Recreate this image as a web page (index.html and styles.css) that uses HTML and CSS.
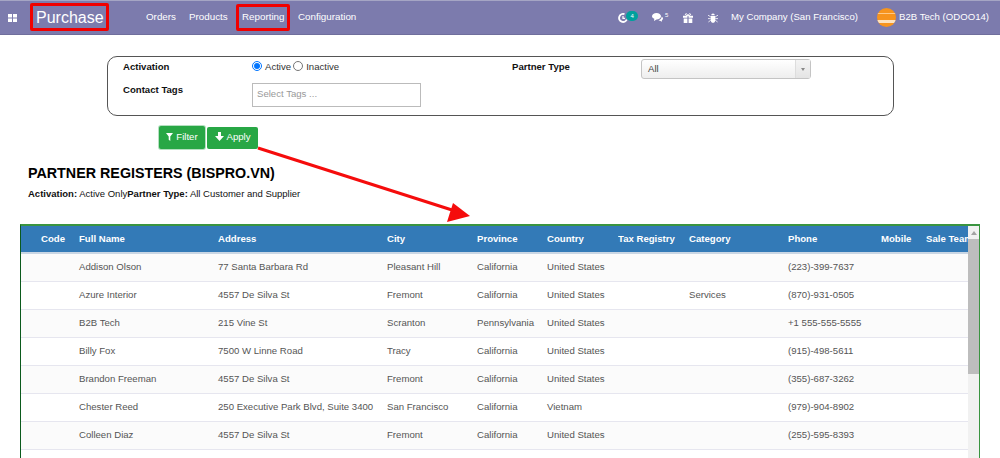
FILE: index.html
```html
<!DOCTYPE html>
<html lang="en">
<head>
    <meta charset="UTF-8">
    <meta name="viewport" content="width=device-width, initial-scale=1.0">
    <title>Partner Registers</title>
    <link rel="stylesheet" href="styles.css">
</head>
<body>

    <!-- Top bar -->
    <nav class="navbar">
        <svg class="apps-icon" width="9" height="8" viewBox="0 0 9 8"><path fill="#fff" d="M0 0h4v3.500H0zM5 0h4v3.500H5zM0 4.500h4V8H0zM5 4.500h4V8H5z"/></svg>
        <span class="brand">Purchase</span>
        <div class="menu">
            <a class="menu-item menu-orders">Orders</a>
            <a class="menu-item menu-products">Products</a>
            <a class="menu-item menu-reporting">Reporting</a>
            <a class="menu-item menu-config">Configuration</a>
        </div>
        <div class="systray">
            <span class="tray-item tray-clock">
                <svg width="10" height="10" viewBox="0 0 10 10"><path fill="none" stroke="#fff" stroke-width="1.900" d="M8.800 6.500A4 4 0 1 1 6.500 1.200"/><path fill="none" stroke="#fff" stroke-width="1.200" d="M5 3v2.400h2"/></svg>
                <span class="badge">4</span>
            </span>
            <span class="tray-item tray-chat">
                <svg width="11" height="9" viewBox="0 0 11 9"><path fill="#fff" d="M4.500 0C7 0 9 1.400 9 3.200S7 6.400 4.500 6.400L2 8l.3-2.200C.9 5.200 0 4.300 0 3.200 0 1.400 2 0 4.500 0z"/><path fill="#fff" d="M9.700 3.600c.8.500 1.300 1.200 1.300 2 0 .8-.5 1.400-1.200 1.800l.2 1.400-2-1.100-1.500-.2c1.700-.5 3.200-2 3.200-3.900z"/></svg>
                <sup class="chat-count">5</sup>
            </span>
            <span class="tray-item tray-gift">
                <svg width="10" height="10" viewBox="0 0 10 10"><path fill="#fff" d="M0 2.800h4.400v2H0zM5.600 2.800H10v2H5.600zM.7 5.400h3.700V10H.7zM5.600 5.400h3.700V10H5.600z"/><path fill="none" stroke="#fff" stroke-width="1" d="M5 2.700C3.600 2.700 2.400 2.300 2.400 1.300 2.400.4 4.200.3 5 2.700 5.800.3 7.600.4 7.600 1.300 7.600 2.300 6.400 2.700 5 2.700z"/></svg>
            </span>
            <span class="tray-item tray-bug">
                <svg width="10" height="10" viewBox="0 0 10 10"><path fill="#fff" d="M3.200 2.200a1.800 1.800 0 0 1 3.600 0zM2.700 3h4.600v4.200C7.300 8.800 6 9.800 5 9.800S2.700 8.800 2.700 7.200z"/><path fill="none" stroke="#fff" stroke-width=".8" d="M0 2.200l2.700 1.600M10 2.200L7.300 3.800M0 5.600h2.700M10 5.600H7.300M.4 9l2.400-1.800M9.600 9L7.200 7.200"/></svg>
            </span>
            <span class="company">My Company (San Francisco)</span>
            <span class="avatar">
                <span class="avatar-line"></span>
                <span class="avatar-stripe"></span>
            </span>
            <span class="user">B2B Tech (ODOO14)</span>
        </div>
    </nav>

    <!-- Filter box -->
    <div class="filter-box">
        <div class="filter-row">
            <label class="filter-label">Activation</label>
            <div class="filter-value radios">
                <input type="radio" name="activation" checked> <span>Active</span>
                <input type="radio" name="activation"> <span>Inactive</span>
            </div>
            <label class="filter-label">Partner Type</label>
            <div class="fake-select">
                <span class="select-text">All</span>
                <span class="select-btn"><span class="select-arrow"></span></span>
            </div>
        </div>
        <div class="filter-row tags-row">
            <label class="filter-label">Contact Tags</label>
            <div class="tags-input">Select Tags ...</div>
        </div>
    </div>

    <div class="buttons">
        <button class="btn btn-filter" type="button">
            <svg width="7" height="8" viewBox="0 0 7 8"><path fill="#fff" d="M0 0h7L4.300 3.400V8L2.700 6.800V3.400z"/></svg>
            Filter
        </button>
        <button class="btn btn-apply" type="button">
            <svg width="9" height="9" viewBox="0 0 9 9"><path fill="#fff" d="M3 0h3v4h3L4.500 9 0 4h3z"/></svg>
            Apply
        </button>
    </div>

    <h2 class="report-title">PARTNER REGISTERS (BISPRO.VN)</h2>
    <p class="report-sub"><b>Activation:</b> Active Only<b>Partner Type:</b> All Customer and Supplier</p>

    <!-- Report table -->
    <div class="table-wrap">
        <table class="report">
            <colgroup>
                <col class="c-code"><col class="c-name"><col class="c-address"><col class="c-city"><col class="c-province">
                <col class="c-country"><col class="c-tax"><col class="c-category"><col class="c-phone"><col class="c-mobile"><col class="c-team">
            </colgroup>
            <thead>
                <tr>
                    <th class="code">Code</th><th>Full Name</th><th>Address</th><th>City</th><th>Province</th>
                    <th>Country</th><th>Tax Registry</th><th>Category</th><th>Phone</th><th>Mobile</th><th>Sale Team</th>
                </tr>
            </thead>
            <tbody>
                <tr><td></td><td>Addison Olson</td><td>77 Santa Barbara Rd</td><td>Pleasant Hill</td><td>California</td><td>United States</td><td></td><td></td><td>(223)-399-7637</td><td></td><td></td></tr>
                <tr><td></td><td>Azure Interior</td><td>4557 De Silva St</td><td>Fremont</td><td>California</td><td>United States</td><td></td><td>Services</td><td>(870)-931-0505</td><td></td><td></td></tr>
                <tr><td></td><td>B2B Tech</td><td>215 Vine St</td><td>Scranton</td><td>Pennsylvania</td><td>United States</td><td></td><td></td><td>+1 555-555-5555</td><td></td><td></td></tr>
                <tr><td></td><td>Billy Fox</td><td>7500 W Linne Road</td><td>Tracy</td><td>California</td><td>United States</td><td></td><td></td><td>(915)-498-5611</td><td></td><td></td></tr>
                <tr><td></td><td>Brandon Freeman</td><td>4557 De Silva St</td><td>Fremont</td><td>California</td><td>United States</td><td></td><td></td><td>(355)-687-3262</td><td></td><td></td></tr>
                <tr><td></td><td>Chester Reed</td><td>250 Executive Park Blvd, Suite 3400</td><td>San Francisco</td><td>California</td><td>Vietnam</td><td></td><td></td><td>(979)-904-8902</td><td></td><td></td></tr>
                <tr><td></td><td>Colleen Diaz</td><td>4557 De Silva St</td><td>Fremont</td><td>California</td><td>United States</td><td></td><td></td><td>(255)-595-8393</td><td></td><td></td></tr>
                <tr><td></td><td></td><td></td><td></td><td></td><td></td><td></td><td></td><td></td><td></td><td></td></tr>
            </tbody>
        </table>
        <div class="scrollbar">
            <span class="scroll-up"></span>
            <span class="scroll-thumb"></span>
        </div>
    </div>

    <!-- Red annotations drawn over the screenshot -->
    <span class="mark mark-brand"></span>
    <span class="mark mark-reporting"></span>
    <svg class="arrow" width="1000" height="458" viewBox="0 0 1000 458">
        <path fill="none" stroke="#f50c0c" stroke-width="3" d="M258 148L452 210"/>
        <path fill="#f50c0c" d="M470 216L447 222L453 203z"/>
    </svg>

</body>
</html>
```

FILE: styles.css
```css
html, body {
    margin: 0;
    height: 458px;
    overflow: hidden;
}

body {
    position: relative;
    font-family: "Liberation Sans", Arial, sans-serif;
    font-size: 9.600px;
    background-color: #ffffff;
    color: #111;
}

/* top bar */
.navbar {
    display: flex;
    align-items: center;
    height: 35px;
    box-sizing: border-box;
    border-top: 1px solid #a5a5c4;
    border-bottom: 1px solid #6f6e9c;
    background: #7c7bad;
    color: #fff;
    padding-left: 8px;
}

.apps-icon {
    flex: none;
}

.brand {
    margin-left: 19px;
    font-size: 16px;
    width: 110px;
}

.menu {
    display: flex;
    font-size: 9.800px;
    padding-bottom: 2px;
}

.menu-item {
    color: #fff;
}

.menu-orders {
    width: 43px;
}

.menu-products {
    width: 53px;
}

.menu-reporting {
    width: 56px;
}

.systray {
    display: flex;
    align-items: center;
    margin-left: auto;
    font-size: 9.600px;
    padding-right: 11px;
}

.tray-item {
    display: flex;
    align-items: center;
}

.tray-clock {
    width: 34px;
}

.tray-chat {
    width: 31px;
}

.tray-gift {
    width: 25px;
}

.tray-bug {
    width: 23px;
}

.badge {
    background: #00a09d;
    border-radius: 5px;
    width: 12px;
    height: 10px;
    margin-left: -2px;
    margin-top: -3px;
    font-size: 6px;
    line-height: 10px;
    text-align: center;
}

.chat-count {
    font-size: 6px;
    line-height: 1;
    margin: -5px 0 0 2px;
}

.company {
    width: 146px;
    padding-bottom: 2px;
}

.user {
    padding-bottom: 2px;
}

.avatar {
    width: 19px;
    height: 19px;
    border-radius: 50%;
    overflow: hidden;
    background: #f7941d;
    margin-right: 3px;
}

.avatar-line {
    display: block;
    margin-top: 5px;
    height: 1px;
    background: #ffc987;
}

.avatar-stripe {
    display: block;
    margin-top: 6px;
    height: 3px;
    background: #fde2bd;
}

/* filter box */
.filter-box {
    box-sizing: border-box;
    width: 787px;
    height: 60px;
    margin: 21px 0 0 107px;
    border: 1px solid #555;
    border-radius: 10px;
    padding: 2px 0 0 15px;
}

.filter-row {
    display: flex;
    align-items: flex-start;
}

.tags-row {
    margin-top: 4px;
}

.filter-label {
    width: 129px;
    font-weight: bold;
    line-height: 14px;
    padding-top: 1px;
    color: #111;
}

.tags-row .filter-label {
    padding-top: 0;
}

.filter-value {
    width: 260px;
}

.radios {
    display: flex;
    align-items: center;
    height: 14px;
    color: #333;
}

.radios input {
    width: 10px;
    height: 10px;
    margin: 0 3px 0 0;
}

.radios span {
    margin-right: 2px;
}

.fake-select {
    display: flex;
    align-items: stretch;
    justify-content: space-between;
    box-sizing: border-box;
    width: 170px;
    height: 20px;
    border: 1px solid #c4c4c4;
    border-radius: 3px;
    background: linear-gradient(#ffffff, #eeeeee);
    color: #444;
}

.select-text {
    padding-left: 6px;
    line-height: 17px;
}

.select-btn {
    display: flex;
    align-items: center;
    justify-content: center;
    width: 14px;
    border-left: 1px solid #dddddd;
    background: linear-gradient(#f4f4f4, #e4e4e4);
}

.select-arrow {
    width: 0;
    height: 0;
    border-left: 2.500px solid transparent;
    border-right: 2.500px solid transparent;
    border-top: 3px solid #888;
}

.tags-input {
    box-sizing: border-box;
    width: 169px;
    height: 24px;
    border: 1px solid #bbb;
    padding-left: 4px;
    line-height: 20px;
    color: #999;
}

/* buttons */
.buttons {
    display: flex;
    align-items: center;
    gap: 2px;
    margin: 10px 0 0 159px;
}

.btn {
    display: flex;
    align-items: center;
    justify-content: center;
    gap: 3px;
    box-sizing: border-box;
    padding: 0 0 2px;
    border: none;
    border-radius: 2px;
    background: #28a745;
    color: #fff;
    font-family: inherit;
    font-size: 9.600px;
}

.btn-filter {
    width: 46px;
    height: 23px;
    box-shadow: 0 0 0 1px #b5e0c0;
}

.btn-apply {
    width: 51px;
    height: 22px;
}

/* report heading */
.report-title {
    margin: 15px 0 0 28px;
    font-size: 14.300px;
    line-height: 18px;
    font-weight: bold;
    color: #000;
}

.report-sub {
    margin: 6px 0 0 28px;
    font-size: 9.500px;
    line-height: 12px;
    color: #111;
}

/* report table */
.table-wrap {
    position: relative;
    box-sizing: border-box;
    width: 960px;
    height: 234px;
    margin: 24px 0 0 20px;
    border-top: 2px solid #3a9440;
    border-left: 1px solid #0b5a1c;
    border-right: 1px solid #3a9440;
    overflow: hidden;
}

.report {
    table-layout: fixed;
    width: 1000px;
    border-collapse: collapse;
    font-size: 9.600px;
}

.c-code { width: 58px; }
.c-name { width: 139px; }
.c-address { width: 169px; }
.c-city { width: 90px; }
.c-province { width: 70px; }
.c-country { width: 71px; }
.c-tax { width: 71px; }
.c-category { width: 99px; }
.c-phone { width: 93px; }
.c-mobile { width: 45px; }
.c-team { width: 95px; }

.report th {
    height: 24px;
    padding: 0 0 2px;
    background: #337ab7;
    border-bottom: 2px solid #c9d6e4;
    color: #fff;
    font-weight: bold;
    text-align: left;
    white-space: nowrap;
    overflow: hidden;
}

.report th.code {
    padding-left: 20px;
}

.report td {
    height: 25px;
    padding: 0 0 2px;
    border-bottom: 1px solid #e6e6ef;
    color: #555;
    white-space: nowrap;
}

.report tbody tr:nth-child(odd) td {
    background: #fbfbfb;
}

.scrollbar {
    position: absolute;
    top: 0;
    right: 0;
    width: 11px;
    height: 100%;
    background: #f1f1f1;
}

.scroll-up {
    display: block;
    width: 0;
    margin: 5px auto 4px;
    border-left: 3px solid transparent;
    border-right: 3px solid transparent;
    border-bottom: 4px solid #a3a3a3;
}

.scroll-thumb {
    display: block;
    height: 135px;
    margin-top: 4px;
    background: #bdbdbd;
}

/* annotations */
.mark {
    position: absolute;
    box-sizing: border-box;
    border: 3px solid #f00000;
    border-radius: 2px;
}

.mark-brand {
    left: 30px;
    top: 3px;
    width: 79px;
    height: 28px;
}

.mark-reporting {
    left: 236px;
    top: 4px;
    width: 54px;
    height: 27px;
}

.arrow {
    position: absolute;
    left: 0;
    top: 0;
    pointer-events: none;
}
```
